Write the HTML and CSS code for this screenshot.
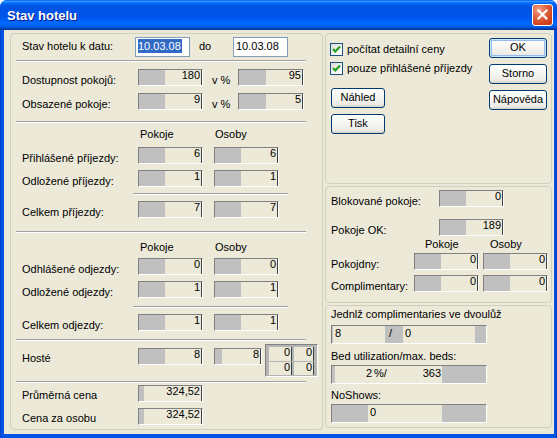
FILE: index.html
```html
<!DOCTYPE html>
<html lang="cs">
<head>
<meta charset="utf-8">
<title>Stav hotelu</title>
<link rel="stylesheet" href="styles.css">
</head>
<body>
<div class="win">
  <div class="titlebar">
    <span class="title">Stav hotelu</span>
    <span class="close"><svg width="13" height="13" viewBox="0 0 13 13"><path d="M2.5 2.5 L10.5 10.5 M10.5 2.5 L2.5 10.5" stroke="#fff" stroke-width="2.2" stroke-linecap="square"/></svg></span>
  </div>
  <div class="frame">
    <div class="client">
      <div class="grp left">
        <div class="row daterow m3">
          <span class="lbl">Stav hotelu k datu:</span>
          <span class="date"><span class="hl">10.03.08</span></span>
          <span class="do">do</span>
          <span class="date"><span class="dt">10.03.08</span></span>
        </div>
        <div class="sep m3"></div>
        <div class="row m7">
          <span class="lbl">Dostupnost pokojů:</span>
          <span class="f"><span class="v">180</span></span>
          <span class="vp">v %</span>
          <span class="f w66"><span class="v">95</span></span>
        </div>
        <div class="row m7">
          <span class="lbl">Obsazené pokoje:</span>
          <span class="f"><span class="v">9</span></span>
          <span class="vp">v %</span>
          <span class="f w66"><span class="v">5</span></span>
        </div>
        <div class="sep m11"></div>
        <div class="hdr m5"><span class="hp">Pokoje</span><span>Osoby</span></div>
        <div class="row m6">
          <span class="lbl">Přihlášené příjezdy:</span>
          <span class="f"><span class="v">6</span></span>
          <span class="f c2"><span class="v">6</span></span>
        </div>
        <div class="row m6">
          <span class="lbl">Odložené příjezdy:</span>
          <span class="f"><span class="v">1</span></span>
          <span class="f c2"><span class="v">1</span></span>
        </div>
        <div class="sep short m6"></div>
        <div class="row m6">
          <span class="lbl">Celkem příjezdy:</span>
          <span class="f"><span class="v">7</span></span>
          <span class="f c2"><span class="v">7</span></span>
        </div>
        <div class="sep m13"></div>
        <div class="hdr m8"><span class="hp">Pokoje</span><span>Osoby</span></div>
        <div class="row m4">
          <span class="lbl">Odhlášené odjezdy:</span>
          <span class="f"><span class="v">0</span></span>
          <span class="f c2"><span class="v">0</span></span>
        </div>
        <div class="row m6">
          <span class="lbl">Odložené odjezdy:</span>
          <span class="f"><span class="v">1</span></span>
          <span class="f c2"><span class="v">1</span></span>
        </div>
        <div class="sep short m8"></div>
        <div class="row m6">
          <span class="lbl">Celkem odjezdy:</span>
          <span class="f"><span class="v">1</span></span>
          <span class="f c2"><span class="v">1</span></span>
        </div>
        <div class="sep m8"></div>
        <div class="row hoste m3">
          <span class="lbl">Hosté</span>
          <span class="f"><span class="v">8</span></span>
          <span class="f c2 w48"><span class="v">8</span></span>
          <div class="cells">
            <span class="v">0</span><span class="v">0</span>
            <span class="v">0</span><span class="v">0</span>
          </div>
        </div>
        <div class="sep m4"></div>
        <div class="row price m2">
          <span class="lbl">Průměrná cena</span>
          <span class="f"><span class="v">324,52</span></span>
        </div>
        <div class="row price m6">
          <span class="lbl">Cena za osobu</span>
          <span class="f"><span class="v">324,52</span></span>
        </div>
      </div>

      <div class="right">
        <div class="grp rtop">
          <div class="rc1">
            <div class="chk"><span class="box"><svg width="11" height="11" viewBox="0 0 11 11"><path d="M2 5 L4.3 7.4 L9 2.6" fill="none" stroke="#21A121" stroke-width="2.2"/></svg></span>počítat detailní ceny</div>
            <div class="chk m6"><span class="box"><svg width="11" height="11" viewBox="0 0 11 11"><path d="M2 5 L4.3 7.4 L9 2.6" fill="none" stroke="#21A121" stroke-width="2.2"/></svg></span>pouze přihlášené příjezdy</div>
            <div class="btn sm m13">Náhled</div>
            <div class="btn sm m6">Tisk</div>
          </div>
          <div class="rc2">
            <div class="btn def">OK</div>
            <div class="btn m6">Storno</div>
            <div class="btn m6">Nápověda</div>
          </div>
        </div>

        <div class="grp rmid">
          <div class="rrow m3">
            <span class="lbl rl1">Blokované pokoje:</span>
            <span class="f"><span class="v">0</span></span>
          </div>
          <div class="rrow m12">
            <span class="lbl rl1">Pokoje OK:</span>
            <span class="f"><span class="v">189</span></span>
          </div>
          <div class="hdr rhdr m2"><span class="hp2">Pokoje</span><span>Osoby</span></div>
          <div class="rrow m2">
            <span class="lbl rl2">Pokojdny:</span>
            <span class="f"><span class="v">0</span></span>
            <span class="f c3"><span class="v">0</span></span>
          </div>
          <div class="rrow m5">
            <span class="lbl rl2">Complimentary:</span>
            <span class="f"><span class="v">0</span></span>
            <span class="f c3"><span class="v">0</span></span>
          </div>
        </div>

        <div class="grp rbot">
          <div class="rlbl m2">Jednlž complimentaries ve dvoulůž</div>
          <div class="bx m4">
            <span class="lt l8">8</span>
            <span class="sl">/</span>
            <span class="lt l0">0</span>
          </div>
          <div class="rlbl m6">Bed utilization/max. beds:</div>
          <div class="bx m2">
            <span class="lt lbed"><span class="n2">2</span><span class="pc">%/</span><span class="n363">363</span></span>
          </div>
          <div class="rlbl m5">NoShows:</div>
          <div class="bx m2">
            <span class="lt lns">0</span>
          </div>
        </div>
      </div>
    </div>
  </div>
</div>
</body>
</html>
```

FILE: styles.css
```css
* { box-sizing: border-box; margin: 0; padding: 0; }
html, body { width: 557px; height: 438px; overflow: hidden; background: #ffffff; }
body { font-family: "Liberation Sans", Arial, sans-serif; font-size: 11px; line-height: 13px; color: #000; }

.win { width: 557px; height: 438px; display: flex; flex-direction: column; border-radius: 7px 7px 0 0; overflow: hidden; background: #0055E5; }

.titlebar {
  height: 30px; flex: none; display: flex; align-items: center; justify-content: space-between;
  padding: 0 4px 0 7px;
  background: linear-gradient(to bottom, #0058EE 0%, #3593FF 4%, #288EFF 6%, #127DFF 8%, #036FFC 10%, #0262EE 14%, #0057E5 20%, #0054E3 24%, #0055EB 56%, #005BF5 66%, #026AFE 76%, #0062EF 86%, #0052D6 92%, #0040AB 96%, #003092 100%);
}
.title { color: #fff; font-weight: bold; font-size: 13px; text-shadow: 1px 1px 0 #0A1883; }
.close {
  width: 21px; height: 22px; margin-top: -1px; border: 1px solid #fff; border-radius: 3px;
  display: flex; align-items: center; justify-content: center;
  background: radial-gradient(circle at 30% 25%, #F0A48A 0%, #E26A45 35%, #D2441E 70%, #C13A16 100%);
}

.frame { flex: 1; padding: 0 3px 4px 4px; background: linear-gradient(to right, #0041D0 0, #0055E5 2px, #0055E5 calc(100% - 2px), #0037B0 100%); }
.client { height: 100%; background: #ECE9D8; display: flex; gap: 2px; padding: 3px 2px 0 6px; }

.grp { border: 1px solid #D0D0BF; border-radius: 4px; }
.left { width: 313px; height: 397px; display: flex; flex-direction: column; }
.right { width: 227px; display: flex; flex-direction: column; gap: 2px; }
.rtop { height: 151px; display: flex; }
.rmid { height: 117px; display: flex; flex-direction: column; padding-left: 5px; }
.rbot { height: 123px; display: flex; flex-direction: column; padding-left: 5px; }

.m2 { margin-top: 2px; } .m3 { margin-top: 3px; } .m4 { margin-top: 4px; } .m5 { margin-top: 5px; }
.m6 { margin-top: 6px; } .m7 { margin-top: 7px; } .m8 { margin-top: 8px; } .m11 { margin-top: 11px; }
.m12 { margin-top: 12px; } .m13 { margin-top: 13px; }

.row { display: flex; height: 17px; padding-left: 11px; flex: none; }
.lbl { width: 116px; margin-top: 5px; white-space: nowrap; flex: none; }

.daterow { height: 20px; }
.daterow .lbl { width: 113px; margin-top: 3px; }
.date { width: 55px; height: 20px; border: 1px solid #7F9DB9; background: #fff; padding: 1px 0 0 2px; line-height: 14px; flex: none; }
.hl { display: inline-block; background: #316AC5; color: #fff; padding-right: 1px; }
.dt { display: inline-block; }
.do { width: 43px; padding: 3px 0 0 9px; flex: none; }

.f {
  width: 65px; height: 17px; flex: none; display: flex; justify-content: flex-end;
  border: 1px solid; border-color: #808080 #FFFFFF #FFFFFF #808080; background: #C0C0C0;
}
.v { width: 37px; background: #ECE9D8; text-align: right; padding-right: 1px; line-height: 11px; border-right: 1px solid #404040; }
.vp { width: 35px; padding: 5px 0 0 9px; flex: none; }
.w66 { width: 66px; }
.c2 { margin-left: 11px; }
.w48 { width: 48px; }
.w48 .v { width: 39px; }
.price .lbl { margin-top: 4px; }
.price .v { width: 58px; }

.hoste { height: 33px; }
.hoste .lbl { margin-top: 8px; }
.hoste .f { margin-top: 4px; }
.cells {
  margin-left: 3px; width: 53px; height: 33px; display: grid;
  grid-template-columns: 23px 20px; grid-template-rows: 14px 13px; gap: 1px 2px;
  padding: 2px 3px 1px 3px; background: #B4B4B4;
  border: 1px solid; border-color: #808080 #FFFFFF #FFFFFF #808080;
}
.cells .v { width: auto; }

.hdr { display: flex; height: 13px; padding-left: 129px; flex: none; }
.hp { width: 75px; }

.sep { height: 2px; border-top: 1px solid #A0A0A0; border-bottom: 1px solid #FFFFFF; margin-left: 5px; margin-right: 16px; flex: none; }
.sep.short { margin-left: 122px; margin-right: 34px; }

.rc1 { padding: 9px 0 0 4px; display: flex; flex-direction: column; align-items: flex-start; }
.rc2 { margin-left: auto; padding: 4px 4px 0 0; display: flex; flex-direction: column; }
.chk { display: flex; align-items: center; height: 13px; white-space: nowrap; }
.box {
  width: 13px; height: 13px; border: 1px solid #1C5180; margin-right: 4px; flex: none;
  background: linear-gradient(135deg, #DCDCD7 0%, #F4F4F0 60%, #FFFFFF 100%);
  display: flex; align-items: center; justify-content: center;
}
.btn {
  width: 58px; height: 20px; border: 1px solid #003C74; border-radius: 3px;
  background: linear-gradient(to bottom, #FFFFFF 0%, #F7F7F4 40%, #ECEBE6 85%, #D6D0C5 100%);
  text-align: center; line-height: 17px; flex: none;
}
.btn.sm { width: 54px; margin-left: 1px; }
.btn.def { box-shadow: inset 0 0 0 1px #CEE7FF, inset 0 0 0 2px #98B8EA; }

.rrow { display: flex; height: 17px; flex: none; }
.rl1 { width: 108px; }
.rl2 { width: 83px; }
.c3 { margin-left: 4px; }
.rhdr { padding-left: 94px; }
.hp2 { width: 65px; }

.rlbl { white-space: nowrap; flex: none; }
.bx {
  width: 156px; height: 19px; flex: none; display: flex; align-items: stretch;
  border: 1px solid; border-color: #808080 #FFFFFF #FFFFFF #808080; background: #C0C0C0;
  line-height: 15px;
}
.lt { background: #ECE9D8; }
.l8 { width: 52px; margin-left: 1px; padding-left: 2px; }
.sl { width: 18px; padding-left: 4px; }
.l0 { width: 72px; padding-left: 2px; }
.lbed { width: 107px; margin-left: 3px; display: flex; }
.n2 { width: 37px; text-align: right; }
.pc { width: 20px; padding-left: 2px; }
.n363 { width: 49px; text-align: right; }
.lns { width: 74px; margin-left: 36px; padding-left: 2px; }
```
